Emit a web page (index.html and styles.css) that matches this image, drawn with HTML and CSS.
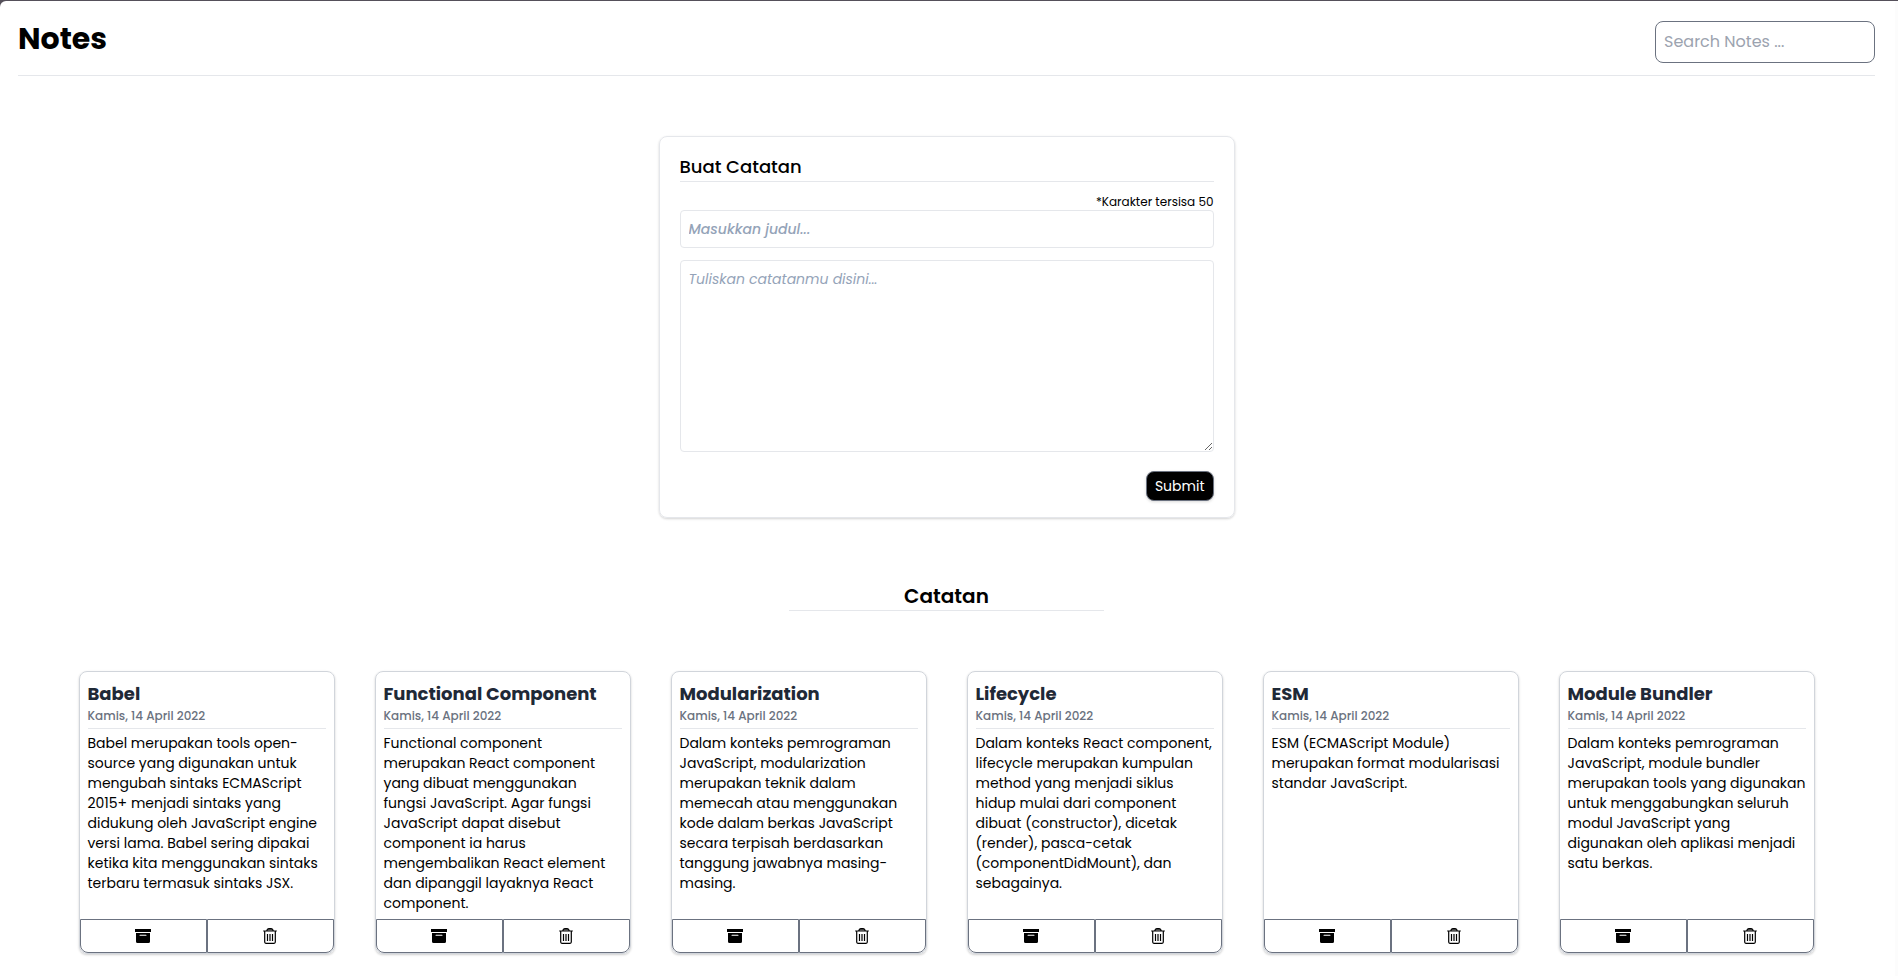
FILE: index.html
```html
<!DOCTYPE html>
<html lang="id">
<head>
<meta charset="utf-8">
<title>Notes</title>
<link rel="stylesheet" href="styles.css">
</head>
<body>
<svg class="sprite" aria-hidden="true">
  <symbol id="archive" viewBox="0 0 16 16">
    <path d="M0 1h16v3H0z"/>
    <path fill-rule="evenodd" d="M1 5h14v8.500a1.500 1.500 0 0 1-1.500 1.500h-11A1.500 1.500 0 0 1 1 13.500zM5 6.700a.5.500 0 0 0 0 1h6a.5.500 0 0 0 0-1z"/>
  </symbol>
  <symbol id="trash" viewBox="0 0 16 16">
    <path d="M4.700 2.500 5.600 1h4.800l.9 1.500z" fill="#555"/>
    <path d="M1.200 3h13.600M2.700 3v11.100q0 1.200 1.200 1.200h8.200q1.200 0 1.200-1.200V3M4.700 3q.5-2.300 2-2.300h2.600q1.500 0 2 2.300M5.500 6v7M8 6v7M10.500 6v7" fill="none" stroke="#000" stroke-width="1.200"/>
  </symbol>
</svg>
<div class="page">
  <header class="header">
    <h1 class="brand">Notes</h1>
    <input class="search" type="text" placeholder="Search Notes ..." aria-label="Search Notes">
  </header>
  <main class="main">
    <form class="form">
      <h2 class="form-title">Buat Catatan</h2>
      <label class="counter" for="judul">*Karakter tersisa 50</label>
      <input class="field field-title" id="judul" type="text" placeholder="Masukkan judul...">
      <textarea class="field field-body" placeholder="Tuliskan catatanmu disini..." aria-label="Isi catatan"></textarea>
      <button class="submit" type="submit">Submit</button>
    </form>
    <h2 class="section-title">Catatan</h2>
    <section class="notes">
      <article class="note">
        <div class="note-content">
          <h3 class="note-title">Babel</h3>
          <p class="note-date">Kamis, 14 April 2022</p>
          <p class="note-text">Babel merupakan tools open-source yang digunakan untuk mengubah sintaks ECMAScript 2015+ menjadi sintaks yang didukung oleh JavaScript engine versi lama. Babel sering dipakai ketika kita menggunakan sintaks terbaru termasuk sintaks JSX.</p>
        </div>
        <div class="actions">
          <button class="action action-archive" type="button" aria-label="Arsipkan"><svg class="icon"><use href="#archive"/></svg></button>
          <button class="action action-delete" type="button" aria-label="Hapus"><svg class="icon"><use href="#trash"/></svg></button>
        </div>
      </article>
      <article class="note">
        <div class="note-content">
          <h3 class="note-title">Functional Component</h3>
          <p class="note-date">Kamis, 14 April 2022</p>
          <p class="note-text">Functional component merupakan React component yang dibuat menggunakan fungsi JavaScript. Agar fungsi JavaScript dapat disebut component ia harus mengembalikan React element dan dipanggil layaknya React component.</p>
        </div>
        <div class="actions">
          <button class="action action-archive" type="button" aria-label="Arsipkan"><svg class="icon"><use href="#archive"/></svg></button>
          <button class="action action-delete" type="button" aria-label="Hapus"><svg class="icon"><use href="#trash"/></svg></button>
        </div>
      </article>
      <article class="note">
        <div class="note-content">
          <h3 class="note-title">Modularization</h3>
          <p class="note-date">Kamis, 14 April 2022</p>
          <p class="note-text">Dalam konteks pemrograman JavaScript, modularization merupakan teknik dalam memecah atau menggunakan kode dalam berkas JavaScript secara terpisah berdasarkan tanggung jawabnya masing-masing.</p>
        </div>
        <div class="actions">
          <button class="action action-archive" type="button" aria-label="Arsipkan"><svg class="icon"><use href="#archive"/></svg></button>
          <button class="action action-delete" type="button" aria-label="Hapus"><svg class="icon"><use href="#trash"/></svg></button>
        </div>
      </article>
      <article class="note">
        <div class="note-content">
          <h3 class="note-title">Lifecycle</h3>
          <p class="note-date">Kamis, 14 April 2022</p>
          <p class="note-text">Dalam konteks React component, lifecycle merupakan kumpulan method yang menjadi siklus hidup mulai dari component dibuat (constructor), dicetak (render), pasca-cetak (componentDidMount), dan sebagainya.</p>
        </div>
        <div class="actions">
          <button class="action action-archive" type="button" aria-label="Arsipkan"><svg class="icon"><use href="#archive"/></svg></button>
          <button class="action action-delete" type="button" aria-label="Hapus"><svg class="icon"><use href="#trash"/></svg></button>
        </div>
      </article>
      <article class="note">
        <div class="note-content">
          <h3 class="note-title">ESM</h3>
          <p class="note-date">Kamis, 14 April 2022</p>
          <p class="note-text">ESM (ECMAScript Module) merupakan format modularisasi standar JavaScript.</p>
        </div>
        <div class="actions">
          <button class="action action-archive" type="button" aria-label="Arsipkan"><svg class="icon"><use href="#archive"/></svg></button>
          <button class="action action-delete" type="button" aria-label="Hapus"><svg class="icon"><use href="#trash"/></svg></button>
        </div>
      </article>
      <article class="note">
        <div class="note-content">
          <h3 class="note-title">Module Bundler</h3>
          <p class="note-date">Kamis, 14 April 2022</p>
          <p class="note-text">Dalam konteks pemrograman JavaScript, module bundler merupakan tools yang digunakan untuk menggabungkan seluruh modul JavaScript yang digunakan oleh aplikasi menjadi satu berkas.</p>
        </div>
        <div class="actions">
          <button class="action action-archive" type="button" aria-label="Arsipkan"><svg class="icon"><use href="#archive"/></svg></button>
          <button class="action action-delete" type="button" aria-label="Hapus"><svg class="icon"><use href="#trash"/></svg></button>
        </div>
      </article>
    </section>
  </main>
</div>
</body>
</html>
```

FILE: styles.css
```css
*, *::before, *::after { box-sizing: border-box; }
html { background: #55505a; }
body {
  margin: 0;
  padding-top: 1px;
  font-family: Poppins, Inter, "Open Sans", sans-serif;
  color: #000;
}
h1, h2, h3, p { margin: 0; }
button, input, textarea { font-family: inherit; color: inherit; margin: 0; }
.sprite { display: none; }
.page {
  min-height: calc(100vh - 1px);
  padding: 0 20px 0 18px;
  border-right: 3px solid #fcfcfc;
  background: #fff;
  border-top-left-radius: 6px;
}
.header {
  display: flex;
  justify-content: space-between;
  align-items: flex-start;
  padding: 20px 0 12px;
  border-bottom: 1px solid #e5e7eb;
}
.brand { font-size: 30px; line-height: 36px; font-weight: 700; }
.search {
  width: 220px;
  height: 42px;
  padding: 7px 8px 9px;
  border: 1px solid #6b7280;
  border-radius: 8px;
  background: #fff;
  font-size: 16px;
  line-height: 24px;
}
.search::placeholder { color: #9ca3af; opacity: 1; }
.main {
  display: flex;
  flex-direction: column;
  align-items: center;
  padding: 60px 0 20px;
}
.form {
  display: flex;
  flex-direction: column;
  width: 100%;
  max-width: 576px;
  padding: 16px 20px;
  border: 1px solid #e5e7eb;
  border-radius: 8px;
  box-shadow: 0 1px 3px rgba(0, 0, 0, .1), 0 1px 2px rgba(0, 0, 0, .08);
}
.form-title {
  border-bottom: 1px solid #e5e7eb;
  font-size: 18px;
  line-height: 28px;
  font-weight: 500;
}
.counter {
  align-self: flex-end;
  margin-top: 12px;
  font-size: 12px;
  line-height: 16px;
}
.field {
  width: 100%;
  padding: 8px;
  border: 1px solid #e5e7eb;
  border-radius: 4px;
  background: #fff;
  font-size: 14px;
  line-height: 20px;
}
.field::placeholder { color: #94a3b8; font-style: italic; opacity: 1; }
.field-title { height: 38px; font-weight: 500; }
.field-body { height: 192px; margin-top: 12px; resize: vertical; }
.submit {
  align-self: flex-end;
  margin-top: 19px;
  padding: 4px 8px;
  border: 1px solid #6b7280;
  border-radius: 8px;
  background: #000;
  color: #fff;
  font-size: 14px;
  line-height: 20px;
  box-shadow: 0 1px 3px rgba(0, 0, 0, .15);
}
.section-title {
  width: 17%;
  min-width: 160px;
  margin: 64px 0 60px;
  border-bottom: 1px solid #e5e7eb;
  font-size: 20px;
  line-height: 28px;
  font-weight: 600;
  text-align: center;
}
.notes {
  display: flex;
  flex-wrap: wrap;
  justify-content: center;
  gap: 40px;
  padding: 0 20px;
}
.note {
  display: flex;
  flex-direction: column;
  width: 256px;
  border: 1px solid #d1d5db;
  border-radius: 8px;
  box-shadow: 0 1px 3px rgba(0, 0, 0, .1), 0 1px 2px rgba(0, 0, 0, .1);
}
.note-content { flex: 1; padding: 8px 8px 6px; }
.note-title {
  color: #1f2937;
  font-size: 18px;
  line-height: 28px;
  font-weight: 700;
}
.note-date {
  padding-bottom: 4px;
  border-bottom: 1px solid #e5e7eb;
  color: #6b7280;
  font-size: 12px;
  line-height: 16px;
  font-weight: 500;
}
.note-text { margin-top: 4px; font-size: 14px; line-height: 20px; }
.actions { display: flex; }
.action {
  display: flex;
  flex: 1;
  justify-content: center;
  align-items: center;
  height: 34px;
  padding: 0;
  border: 1px solid #6b7280;
  background: #fff;
}
.action-archive { border-bottom-left-radius: 8px; }
.action-delete { border-bottom-right-radius: 8px; }
.icon { width: 16px; height: 16px; }
```
